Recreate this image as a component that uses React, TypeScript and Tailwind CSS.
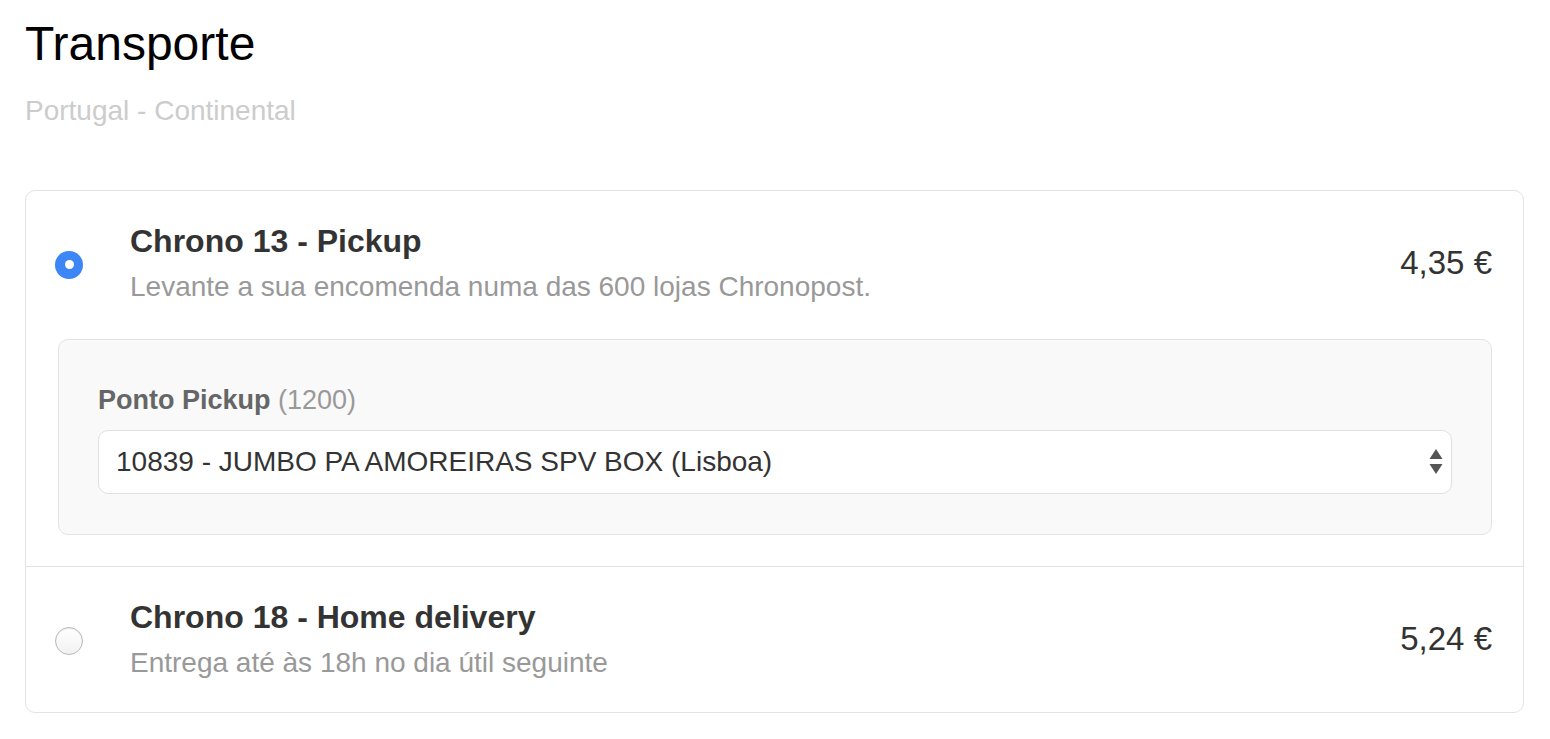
import React from 'react';

interface ShippingRate {
  id: string;
  title: string;
  description: string;
  price: string;
}

const rates: ShippingRate[] = [
  {
    id: 'chrono13',
    title: 'Chrono 13 - Pickup',
    description: 'Levante a sua encomenda numa das 600 lojas Chronopost.',
    price: '4,35 €',
  },
  {
    id: 'chrono18',
    title: 'Chrono 18 - Home delivery',
    description: 'Entrega até às 18h no dia útil seguinte',
    price: '5,24 €',
  },
];

const Radio: React.FC<{ checked: boolean }> = ({ checked }) =>
  checked ? (
    <div className="w-[28px] h-[28px] rounded-full bg-[#3d86f6] flex items-center justify-center shrink-0">
      <div className="w-[9px] h-[9px] rounded-full bg-white" />
    </div>
  ) : (
    <div className="w-[28px] h-[28px] rounded-full border border-[#b8b8b8] bg-gradient-to-b from-white to-[#f1f1f1] shadow-[inset_0_1px_1px_rgba(0,0,0,0.08)] shrink-0" />
  );

const PickupSelect: React.FC = () => (
  <div className="ml-[3px] mt-[31px] rounded-[10px] border border-[#e3e3e3] bg-[#f9f9f9] px-[39px] pt-[40px] pb-[40px]">
    <div className="text-[27px] leading-[40px]">
      <span className="font-bold text-[#666666]">Ponto Pickup</span>{' '}
      <span className="text-[#999999]">(1200)</span>
    </div>
    <div className="mt-[10px] h-[64px] rounded-[10px] border border-[#e0e0e0] bg-white flex items-center justify-between pl-[17px] pr-[8px]">
      <span className="text-[28px] text-[#333333]">10839 - JUMBO PA AMOREIRAS SPV BOX (Lisboa)</span>
      <svg width="14" height="26" viewBox="0 0 14 26" className="shrink-0">
        <path d="M7 0 L13.5 10 L0.5 10 Z" fill="#555555" />
        <path d="M0.5 15 L13.5 15 L7 25 Z" fill="#555555" />
      </svg>
    </div>
  </div>
);

const RateRow: React.FC<{ rate: ShippingRate; selected: boolean; first: boolean }> = ({
  rate,
  selected,
  first,
}) => (
  <div className={first ? 'pl-[29px] pr-[31px] pt-[30px] pb-[31px]' : 'pl-[29px] pr-[31px] pt-[30px] pb-[28px] border-t border-[#e3e3e3]'}>
    <div className="flex items-center">
      <Radio checked={selected} />
      <div className="ml-[47px] flex-1 min-w-0">
        <div className="text-[32px] leading-[40px] font-bold text-[#333333]">{rate.title}</div>
        <div className="mt-[5px] text-[28px] leading-[42px] text-[#999999]">{rate.description}</div>
      </div>
      <div className="text-[33px] leading-[40px] text-[#333333] shrink-0 -mt-[3px]">{rate.price}</div>
    </div>
    {selected && <PickupSelect />}
  </div>
);

export default function App() {
  return (
    <div
      className="min-h-screen bg-white pl-[25px] pr-[26px] pt-[15px]"
      style={{ fontFamily: '"Liberation Sans", Arial, sans-serif' }}
    >
      <h1 className="text-[48px] leading-[58px] text-black">Transporte</h1>
      <p className="mt-[18px] text-[28px] leading-[40px] text-[#cccccc]">Portugal - Continental</p>

      <div className="mt-[59px] rounded-[10px] border border-[#e3e3e3]">
        {rates.map((rate, i) => (
          <RateRow key={rate.id} rate={rate} selected={i === 0} first={i === 0} />
        ))}
      </div>
    </div>
  );
}
